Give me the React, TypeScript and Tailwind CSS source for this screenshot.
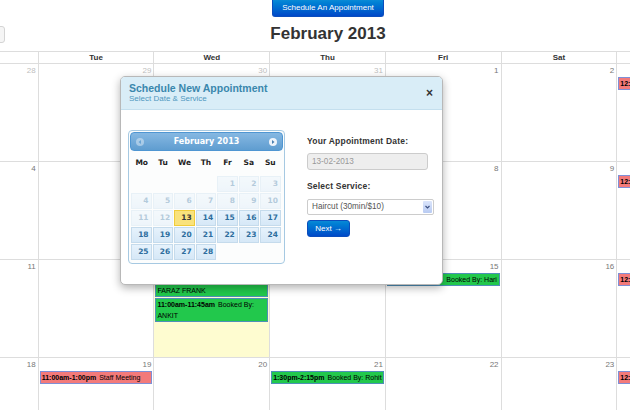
import React from "react";

type Ev = { kind: "red" | "green"; time: string; title: string };
type Day = { d: number; out?: boolean; today?: boolean; ev?: Ev[] };

const lunch: Ev = { kind: "red", time: "12:00pm-1:00pm", title: "Lunch Break" };

const weeks: Day[][] = [
  [
    { d: 28, out: true },
    { d: 29, out: true },
    { d: 30, out: true },
    { d: 31, out: true },
    { d: 1 },
    { d: 2 },
    { d: 3, ev: [lunch] },
  ],
  [{ d: 4 }, { d: 5 }, { d: 6 }, { d: 7 }, { d: 8 }, { d: 9 }, { d: 10, ev: [lunch] }],
  [
    { d: 11 },
    { d: 12 },
    {
      d: 13,
      today: true,
      ev: [
        { kind: "green", time: "10:00am-10:45am", title: "Booked By: FARAZ FRANK" },
        { kind: "green", time: "11:00am-11:45am", title: "Booked By: ANKIT" },
      ],
    },
    { d: 14 },
    { d: 15, ev: [{ kind: "green", time: "9:30am-10:15am", title: "Booked By: Hari" }] },
    { d: 16 },
    { d: 17, ev: [lunch] },
  ],
  [
    { d: 18 },
    { d: 19, ev: [{ kind: "red", time: "11:00am-1:00pm", title: "Staff Meeting" }] },
    { d: 20 },
    { d: 21, ev: [{ kind: "green", time: "1:30pm-2:15pm", title: "Booked By: Rohit" }] },
    { d: 22 },
    { d: 23 },
    { d: 24, ev: [lunch] },
  ],
];

function Event({ e }: { e: Ev }) {
  const color =
    e.kind === "red"
      ? "bg-[#f37a7a] border-[#7f8fd6]"
      : "bg-[#22c84c] border-[#4f8fb8]";
  return (
    <div className={`mx-px mb-px border ${color} px-px text-[7px] leading-[11px] text-black overflow-hidden`}>
      <span className="font-bold">{e.time}</span>
      <span className="ml-[3px]">{e.title}</span>
    </div>
  );
}

const dayNames = ["Mon", "Tue", "Wed", "Thu", "Fri", "Sat", "Sun"];
const dpNames = ["Mo", "Tu", "We", "Th", "Fr", "Sa", "Su"];

function DatePicker() {
  const cells: (number | null)[] = [null, null, null, null];
  for (let i = 1; i <= 28; i++) cells.push(i);
  return (
    <div className="w-[157px] h-[134px] border border-[#a6c9e2] rounded-[4px] bg-[#fcfdfd] p-[1px] font-['DejaVu_Sans',Verdana,sans-serif]">
      <div className="h-[19px] rounded-[4px] border border-[#4f96d2] bg-gradient-to-b from-[#86b8e2] to-[#5f9dd0] flex items-center justify-between px-[5px] text-white">
        <svg width="8" height="8" viewBox="0 0 8 8" className="opacity-40">
          <circle cx="4" cy="4" r="4" fill="#ffffff" />
          <path d="M5 2 L2.5 4 L5 6 Z" fill="#5f9dd0" />
        </svg>
        <span className="text-[8px] font-bold leading-[10px]">February 2013</span>
        <svg width="8" height="8" viewBox="0 0 8 8">
          <circle cx="4" cy="4" r="4" fill="#eef4fb" />
          <path d="M3 2 L5.5 4 L3 6 Z" fill="#4a7fb0" />
        </svg>
      </div>
      <div className="pl-[1px] pr-[2px]">
        <div className="grid grid-cols-7 mt-[6px] h-[12px] text-[7.5px] font-bold leading-[12px] text-[#222] text-center">
          {dpNames.map((n) => (
            <div key={n}>{n}</div>
          ))}
        </div>
        <div className="grid grid-cols-7 gap-[1px] mt-[7px]">
          {cells.map((c, i) => {
            if (c === null) return <div key={i} className="h-[16px]" />;
            let cls =
              "border-[#c5dbec] bg-gradient-to-b from-[#e6f2fc] to-[#d6e8f7] text-[#2e6e9e]";
            if (c < 13) cls += " opacity-[0.35]";
            if (c === 13)
              cls = "border-[#f0cc3a] bg-[#f9e27c] text-[#363636]";
            return (
              <div
                key={i}
                className={`h-[16px] border ${cls} text-right pr-[2px] text-[7.5px] font-bold leading-[14px]`}
              >
                {c}
              </div>
            );
          })}
        </div>
      </div>
    </div>
  );
}

function Modal() {
  return (
    <div className="absolute left-[120px] top-[76px] w-[323px] h-[209px] bg-white border border-[#b8b8b8] rounded-[5px] shadow-[0_3px_8px_rgba(0,0,0,0.3)] overflow-hidden">
      <div className="h-[33px] bg-[#d9edf7] border-b border-[#c4dfee] flex items-center justify-between pl-[8px] pr-[9px]">
        <div className="text-[#3a87ad]">
          <div className="text-[10.5px] font-bold leading-[12px]">Schedule New Appointment</div>
          <div className="text-[8px] leading-[10px] text-[#4f98bf]">Select Date &amp; Service</div>
        </div>
        <div className="text-[12px] font-bold leading-[12px] text-[#333]">×</div>
      </div>
      <div className="flex pl-[7px] pt-[20px]">
        <DatePicker />
        <div className="ml-[22px] pt-[5px] text-[#333]">
          <div className="text-[8.5px] font-bold leading-[12px] tracking-[0.2px]">Your Appointment Date:</div>
          <div className="mt-[6px] w-[121px] h-[17px] border border-[#ccc] bg-[#eeeeee] rounded-[3px] px-[4px] text-[8.2px] leading-[15px] text-[#999]">
            13-02-2013
          </div>
          <div className="mt-[10px] text-[8.5px] font-bold leading-[12px] tracking-[0.2px]">Select Service:</div>
          <div className="mt-[7px] w-[127px] h-[16px] border border-[#ccc] rounded-[2px] bg-white flex items-center justify-between pl-[4px] pr-[1px]">
            <span className="text-[8.2px] leading-[14px] text-[#555]">Haircut (30min/$10)</span>
            <span className="w-[9px] h-[12px] bg-gradient-to-b from-[#dbe5fb] to-[#b9cbf2] flex items-center justify-center rounded-[1px]">
              <svg width="5" height="4" viewBox="0 0 5 4">
                <path d="M0.5 1 L2.5 3 L4.5 1" stroke="#3b4f80" strokeWidth="1.1" fill="none" />
              </svg>
            </span>
          </div>
          <div className="mt-[5px] w-[43px] h-[17px] rounded-[3px] border border-[#0b4dbd] bg-gradient-to-b from-[#0a8ad6] to-[#0049c8] text-white text-[8px] leading-[15px] text-center">
            Next →
          </div>
        </div>
      </div>
    </div>
  );
}

export default function App() {
  return (
    <div className="relative w-[630px] h-[410px] overflow-hidden bg-white font-['Liberation_Sans',Arial,sans-serif]">
      <div className="ml-[-77px] w-[810px]">
        <div className="flex justify-center h-[17px]">
          <div className="w-[112px] h-[17px] rounded-b-[3px] border border-[#0b4dbd] border-t-0 bg-gradient-to-b from-[#0a8ad6] to-[#0048c8] text-white text-[8px] leading-[16px] text-center">
            Schedule An Appointment
          </div>
        </div>
        <div className="grid grid-cols-[82px_1fr_82px] items-center h-[34px]">
          <div className="h-[17px] border border-[#d4d4d4] bg-[#f5f5f5] rounded-[3px]" />
          <div className="text-center text-[17px] font-bold text-[#333] leading-[20px]">February 2013</div>
          <div />
        </div>
        <div className="border-t border-[#dddddd]">
          <div className="grid grid-cols-7">
            {dayNames.map((n) => (
              <div
                key={n}
                className="h-[12px] border-r border-b border-[#dddddd] text-center text-[8px] font-bold leading-[11px] text-[#333]"
              >
                {n}
              </div>
            ))}
          </div>
          {weeks.map((w, wi) => (
            <div key={wi} className="grid grid-cols-7">
              {w.map((c) => (
                <div
                  key={c.d}
                  className={`h-[98px] border-r border-b border-[#dddddd] ${c.today ? "bg-[#fefcd0]" : ""}`}
                >
                  <div
                    className={`text-right pr-[2px] text-[8px] leading-[13px] ${c.out ? "text-[#c0c0c0]" : "text-[#777]"}`}
                  >
                    {c.d}
                  </div>
                  {c.ev?.map((e, i) => (
                    <Event key={i} e={e} />
                  ))}
                </div>
              ))}
            </div>
          ))}
        </div>
      </div>
      <Modal />
    </div>
  );
}
